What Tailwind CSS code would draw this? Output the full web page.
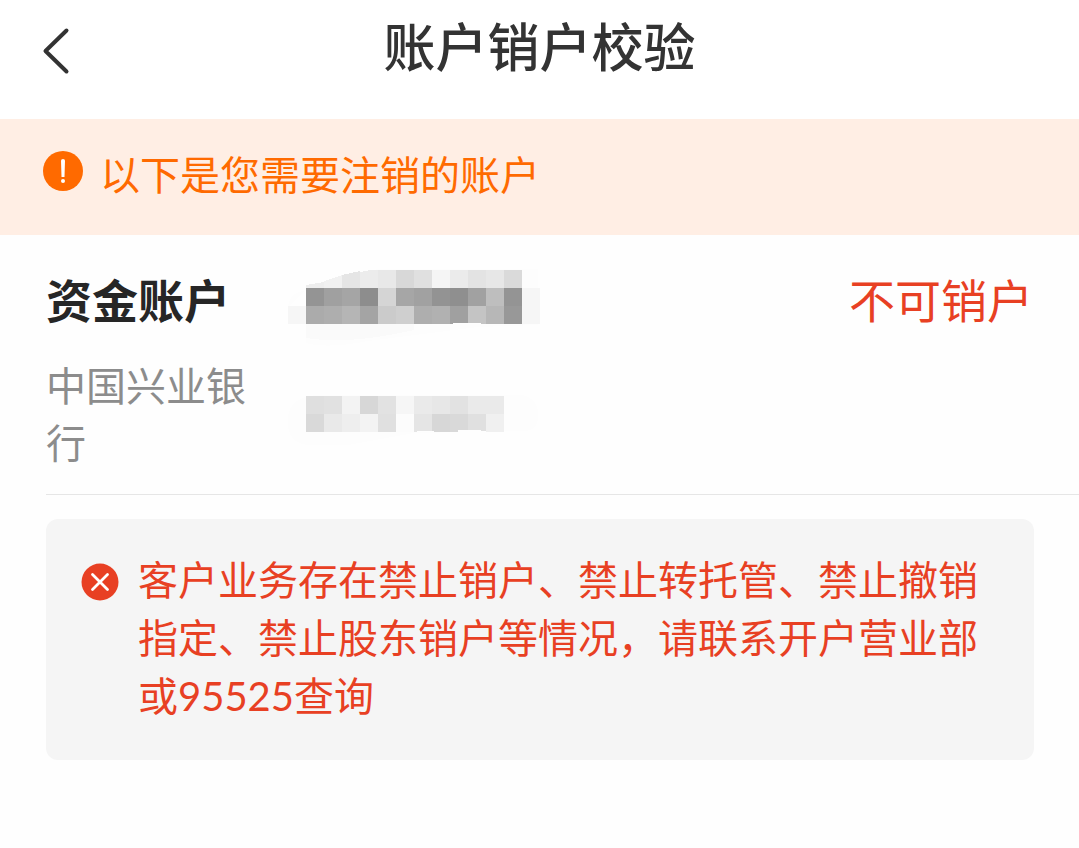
<!DOCTYPE html>
<html lang="zh-CN">
<head>
  <meta charset="UTF-8" />
  <meta name="viewport" content="width=device-width, initial-scale=1" />
  <title>账户销户校验</title>
  <script src="https://cdn.jsdelivr.net/npm/@tailwindcss/browser@4"></script>
</head>
<body class="bg-[#fefefe] font-['Lato','Noto_Sans_CJK_SC',sans-serif]">
  <header class="grid grid-cols-[1fr_auto_1fr] items-start bg-white px-9 pt-[10px] pb-8">
    <button type="button" aria-label="返回" class="w-10 h-[77px] flex items-center justify-center">
      <svg width="40" height="56" viewBox="0 0 40 56" fill="none" stroke="#333333" stroke-width="4" stroke-linecap="round" stroke-linejoin="round">
        <path d="M30.500 9.500L9.500 30L30.500 50.500" />
      </svg>
    </button>
    <h1 class="text-[52px] leading-[75px] font-medium text-[#333333]">账户销户校验</h1>
  </header>

  <div class="flex items-start gap-[17px] bg-[#ffeee4] pl-[43px] pr-11 pt-[26px] pb-[30px]">
    <svg class="shrink-0 mt-[6px]" width="40" height="40" viewBox="0 0 40 40">
      <circle cx="20" cy="20" r="20" fill="#ff6a00" />
      <path d="M18 9.500a2 1.500 0 0 1 4 0L21.500 26h-3z" fill="#fff" />
      <circle cx="20" cy="30" r="2" fill="#fff" />
    </svg>
    <p class="text-[40px] leading-[60px] text-[#ff6a00]">以下是您需要注销的账户</p>
  </div>

  <main class="pl-[46px]">
    <section class="grid grid-cols-[200px_1fr_auto] gap-x-[42px] gap-y-[9px] pt-8 pb-[22px] pr-[46px] border-b border-[#e6e6e6]">
      <h2 class="text-[46px] leading-[68px] font-bold text-[#262626]">资金账户</h2>
      <svg class="-mt-[6px]" width="270" height="88" viewBox="0 0 270 88" shape-rendering="crispEdges">
        <path d="M0 46Q2 30 18 30L18 82Q40 88 80 80L190 66L250 64V8L90 8L18 28" fill="#fdfdfd" />
        <path d="M18 63h108v6Q60 84 18 77z" fill="#fafafa" />
        <path d="M0 45h18v18H0zM234 27h18v36h-18z" fill="#f6f6f6" />
        <path d="M18 24L36 21V27H18z" fill="#eeeeee" />
        <path d="M36 20L54 14V27H36z" fill="#f1f1f1" />
        <path d="M54 14L72 10V27H54z" fill="#e5e5e5" />
        <path d="M72 11L82 9H90V27H72z" fill="#ececec" />
        <rect x="90" y="9" width="18" height="18" fill="#e8e8e8" />
        <rect x="108" y="9" width="18" height="18" fill="#d8d8d8" />
        <rect x="126" y="9" width="18" height="18" fill="#e0e0e0" />
        <rect x="144" y="9" width="18" height="18" fill="#f5f5f5" />
        <rect x="162" y="9" width="18" height="18" fill="#ebebeb" />
        <rect x="180" y="9" width="18" height="18" fill="#e3e3e3" />
        <rect x="198" y="9" width="18" height="18" fill="#e7e7e7" />
        <rect x="216" y="9" width="18" height="18" fill="#dadada" />
        <rect x="18" y="27" width="18" height="18" fill="#949494" />
        <rect x="36" y="27" width="18" height="18" fill="#a0a0a0" />
        <rect x="54" y="27" width="18" height="18" fill="#a5a5a5" />
        <rect x="72" y="27" width="18" height="18" fill="#8d8d8d" />
        <rect x="90" y="27" width="18" height="18" fill="#d5d5d5" />
        <rect x="108" y="27" width="18" height="18" fill="#a6a6a6" />
        <rect x="126" y="27" width="18" height="18" fill="#a1a1a1" />
        <rect x="144" y="27" width="18" height="18" fill="#939393" />
        <rect x="162" y="27" width="18" height="18" fill="#8f8f8f" />
        <rect x="180" y="27" width="18" height="18" fill="#a1a1a1" />
        <rect x="198" y="27" width="18" height="18" fill="#bebebe" />
        <rect x="216" y="27" width="18" height="18" fill="#949494" />
        <rect x="18" y="45" width="18" height="18" fill="#ababab" />
        <rect x="36" y="45" width="18" height="18" fill="#aeaeae" />
        <rect x="54" y="45" width="18" height="18" fill="#b5b5b5" />
        <rect x="72" y="45" width="18" height="18" fill="#a4a4a4" />
        <rect x="90" y="45" width="18" height="18" fill="#cbcbcb" />
        <rect x="108" y="45" width="18" height="18" fill="#cfcfcf" />
        <rect x="126" y="45" width="18" height="18" fill="#aeaeae" />
        <rect x="144" y="45" width="18" height="18" fill="#b1b1b1" />
        <rect x="162" y="45" width="18" height="18" fill="#a0a0a0" />
        <rect x="180" y="45" width="18" height="18" fill="#c4c4c4" />
        <rect x="198" y="45" width="18" height="18" fill="#b7b7b7" />
        <rect x="216" y="45" width="18" height="18" fill="#989898" />
        <path d="M162 63Q176 60 198 63z" fill="#fefefe" />
      </svg>
      <span class="text-[46px] leading-[68px] text-[#e84023]">不可销户</span>

      <p class="text-[40px] leading-[57px] text-[#8c8c8c]">中国兴业银行</p>
      <svg class="mt-[25px]" width="270" height="72" viewBox="0 0 270 72" shape-rendering="crispEdges">
        <path d="M0 40Q-2 14 30 12L234 12Q252 16 250 36Q248 50 230 48L126 50L60 62H20Q0 60 0 40z" fill="#fdfdfd" />
        <rect x="18" y="13" width="18" height="18" fill="#dfdfdf" />
        <rect x="36" y="13" width="18" height="18" fill="#e1e1e1" />
        <rect x="54" y="13" width="18" height="18" fill="#f3f3f3" />
        <rect x="72" y="13" width="18" height="18" fill="#d7d7d7" />
        <rect x="90" y="13" width="18" height="18" fill="#e2e2e2" />
        <rect x="108" y="13" width="18" height="18" fill="#f6f6f6" />
        <rect x="126" y="13" width="18" height="18" fill="#eaeaea" />
        <rect x="144" y="13" width="18" height="18" fill="#e7e7e7" />
        <rect x="162" y="13" width="18" height="18" fill="#e2e2e2" />
        <rect x="180" y="13" width="36" height="18" fill="#eaeaea" />
        <rect x="18" y="31" width="18" height="18" fill="#d9d9d9" />
        <rect x="36" y="31" width="18" height="18" fill="#e9e9e9" />
        <rect x="54" y="31" width="18" height="18" fill="#eeeeee" />
        <rect x="72" y="31" width="18" height="18" fill="#f3f3f3" />
        <rect x="90" y="31" width="18" height="18" fill="#e0e0e0" />
        <rect x="108" y="31" width="18" height="18" fill="#fcfcfc" />
        <rect x="126" y="31" width="18" height="18" fill="#e5e5e5" />
        <rect x="144" y="31" width="18" height="18" fill="#d7d7d7" />
        <rect x="162" y="31" width="18" height="18" fill="#d9d9d9" />
        <rect x="180" y="31" width="18" height="18" fill="#e0e0e0" />
        <rect x="198" y="31" width="18" height="18" fill="#f0f0f0" />
        <path d="M126 49Q136 47 146 48V49zM170 49V47Q184 46 198 48V49z" fill="#fefefe" />
      </svg>
    </section>

    <div class="flex items-start gap-[19px] mt-6 mr-[45px] pl-[35px] pr-11 pt-8 pb-[35px] bg-[#f5f5f5] rounded-xl">
      <svg class="shrink-0 mt-3" width="38" height="38" viewBox="0 0 38 38">
        <circle cx="19" cy="19" r="18.5" fill="#e84023" />
        <path d="M11.500 11.500L26.500 26.500M26.500 11.500L11.500 26.500" stroke="#fff" stroke-width="2.800" stroke-linecap="round" />
      </svg>
      <p class="text-[40px] leading-[58px] text-[#e84023]">客户业务存在禁止销户、禁止转托管、禁止撤销指定、禁止股东销户等情况，请联系开户营业部或95525查询</p>
    </div>
  </main>
</body>
</html>
